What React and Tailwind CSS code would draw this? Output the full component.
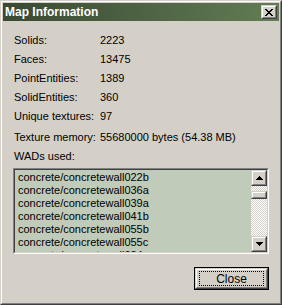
const rows = [
  ['Solids:', '2223', 'h-[19px]'],
  ['Faces:', '13475', 'h-[19px]'],
  ['PointEntities:', '1389', 'h-[19px]'],
  ['SolidEntities:', '360', 'h-[19px]'],
  ['Unique textures:', '97', 'h-[21px]'],
  ['Texture memory:', '55680000 bytes (54.38 MB)', 'h-[19px]'],
];

const wads = [
  'concrete/concretewall022b',
  'concrete/concretewall036a',
  'concrete/concretewall039a',
  'concrete/concretewall041b',
  'concrete/concretewall055b',
  'concrete/concretewall055c',
  'concrete/concretewall084',
];

function Raised({ className = '', children }) {
  return (
    <div className={`border border-t-[#d4d0c8] border-l-[#d4d0c8] border-r-[#404040] border-b-[#404040] ${className}`}>
      <div className="w-full h-full border border-t-white border-l-white border-r-[#808080] border-b-[#808080] bg-[#d4d0c8] flex items-center justify-center">
        {children}
      </div>
    </div>
  );
}

function Arrow({ down }) {
  return (
    <svg width="7" height="4" viewBox="0 0 7 4" className={down ? 'rotate-180' : ''}>
      <path d="M3.5 0 L7 4 L0 4 Z" fill="#000" shapeRendering="crispEdges" />
    </svg>
  );
}

export default function App() {
  return (
    <div className="w-[282px] h-[305px] font-['Liberation_Sans',Arial,sans-serif] text-[11px] text-black select-none">
      <div className="w-full h-full border border-t-[#d4d0c8] border-l-[#d4d0c8] border-r-[#404040] border-b-[#404040]">
        <div className="w-full h-full border border-t-white border-l-white border-r-[#808080] border-b-[#808080]">
          <div className="w-full h-full p-px bg-[#d4d0c8] flex flex-col">
            <div className="h-[18px] flex items-center pl-[2px] pr-[2px] bg-gradient-to-r from-[#3a4933] to-[#627d54]">
              <span className="text-white font-bold text-[12px] leading-none font-['Liberation_Sans',Arial,sans-serif] mr-auto">
                Map Information
              </span>
              <Raised className="w-[16px] h-[14px]">
                <svg width="8" height="7" viewBox="0 0 8 7">
                  <path d="M0 0h2v1h1v1h2V1h1V0h2v1H7v1H6v1H5v1h1v1h1v1h1v1H6V6H5V5H3v1H2v1H0V6h1V5h1V4h1V3H2V2H1V1H0z" fill="#000" />
                </svg>
              </Raised>
            </div>

            <div className="flex-1 flex flex-col px-[10px] pt-[10px]">
              {rows.map(([label, value, h]) => (
                <div key={label} className={`flex leading-[19px] pl-px ${h}`}>
                  <span className="w-[86px] shrink-0">{label}</span>
                  <span>{value}</span>
                </div>
              ))}
              <div className="h-[19px] leading-[19px] pl-px">WADs used:</div>

              <div className="mt-[2px] h-[86px] border border-t-[#808080] border-l-[#808080] border-r-white border-b-white">
                <div className="w-full h-full border border-t-[#404040] border-l-[#404040] border-r-[#d4d0c8] border-b-[#d4d0c8] bg-[#c0cbb9] flex overflow-hidden">
                  <div className="flex-1 pl-[3px] pt-px overflow-hidden">
                    {wads.map((w) => (
                      <div key={w} className="leading-[13px] whitespace-nowrap">{w}</div>
                    ))}
                  </div>
                  <div className="w-[16px] flex flex-col bg-[repeating-conic-gradient(#d4d0c8_0_25%,#ffffff_0_50%)] bg-[length:2px_2px]">
                    <Raised className="w-[16px] h-[16px] shrink-0">
                      <Arrow />
                    </Raised>
                    <div className="flex-1 pt-[5px]">
                      <Raised className="w-[16px] h-[8px]" />
                    </div>
                    <Raised className="w-[16px] h-[16px] shrink-0">
                      <Arrow down />
                    </Raised>
                  </div>
                </div>
              </div>

              <div className="flex justify-end mt-[13px]">
                <div className="w-[75px] h-[23px] border border-black">
                  <Raised className="w-full h-full">
                    <div className="w-[65px] h-[15px] border border-dotted border-black flex items-center justify-center leading-none text-[12px]">
                      Close
                    </div>
                  </Raised>
                </div>
              </div>
            </div>
          </div>
        </div>
      </div>
    </div>
  );
}
